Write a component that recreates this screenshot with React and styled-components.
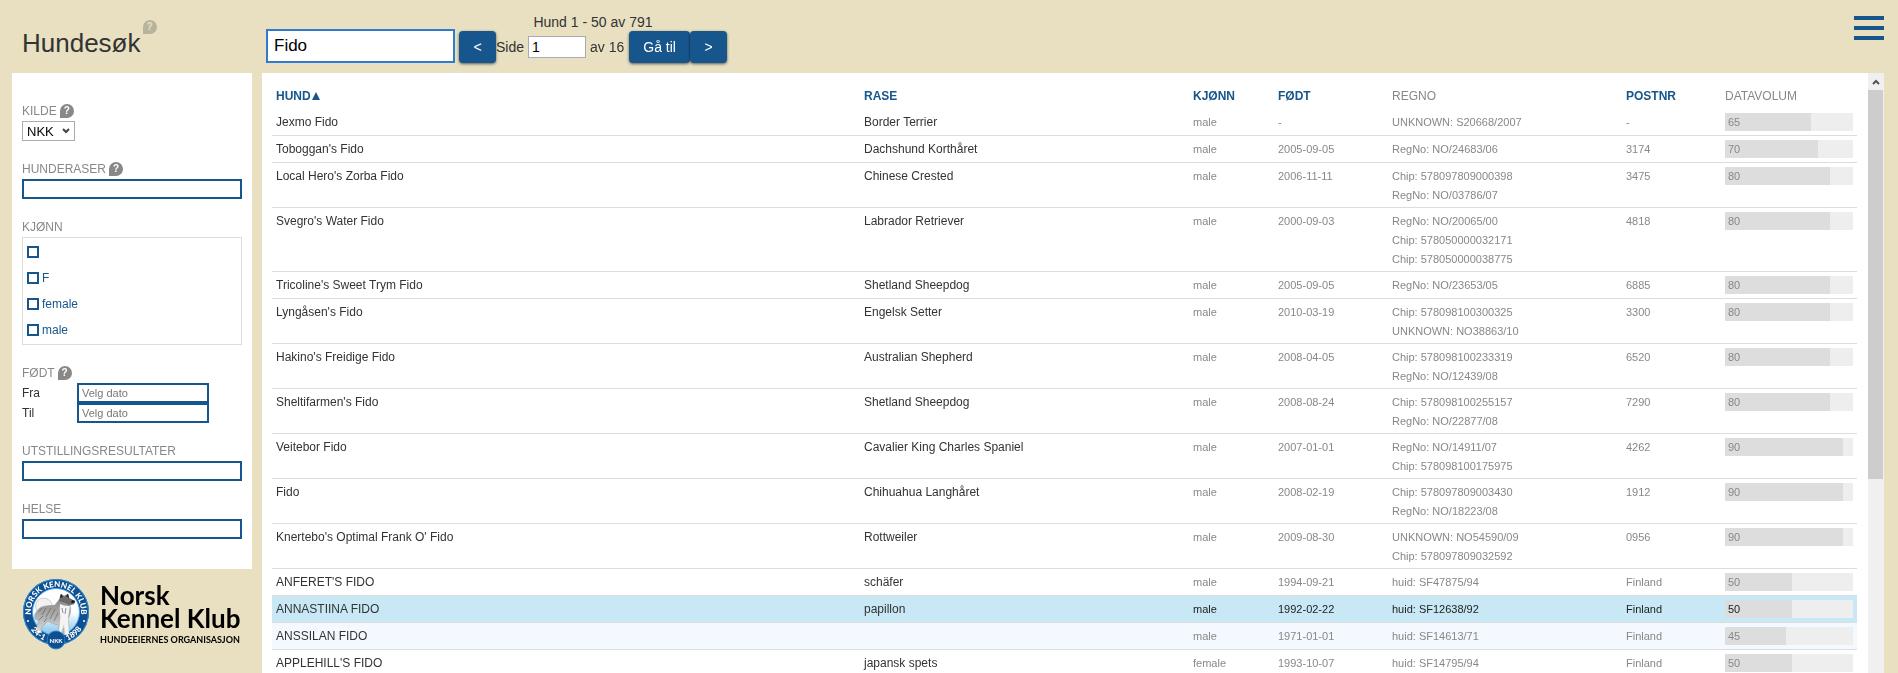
import React from "react";
import styled, { createGlobalStyle } from "styled-components";

const blue = "#17568c";
const sand = "#e8e0c1";

const GlobalStyle = createGlobalStyle`
  *, *::before, *::after { box-sizing: border-box; }
  body {
    margin: 0;
    background: ${sand};
    color: #333;
    font-family: "Liberation Sans", Arial, sans-serif;
    font-size: 12px;
  }
  input, button, select { font-family: inherit; margin: 0; }
`;

const Page = styled.div`
  display: flex;
  flex-direction: column;
  height: 100vh;
  overflow: hidden;
`;

const Header = styled.header`
  flex: none;
  display: flex;
  align-items: flex-start;
  height: 73px;
  padding: 0 14px 0 22px;
`;

const TitleBlock = styled.div`
  display: flex;
  align-items: flex-start;
  gap: 2px;
  width: 244px;
  padding-top: 20px;
`;

const Title = styled.h1`
  margin: 0;
  padding-top: 8px;
  font-size: 26px;
  line-height: 30px;
  font-weight: 400;
`;

const HelpButton = styled.button`
  flex: none;
  width: 14px;
  height: 14px;
  padding: 0;
  border: 0;
  border-radius: 7px 7px 7px 0;
  background: ${(p) => (p.$faded ? "#b8b39f" : "#888")};
  color: ${(p) => (p.$faded ? sand : "#fff")};
  font-size: 10px;
  line-height: 14px;
  font-weight: 700;
`;

const SearchInput = styled.input`
  width: 189px;
  height: 34px;
  margin: 29px 4px 0 0;
  padding: 0 6px;
  border: 2px solid #2f7bd0;
  border-radius: 0;
  outline: none;
  background: #fff;
  color: #000;
  font-size: 17px;
`;

const Pager = styled.nav`
  display: flex;
  flex-direction: column;
  align-items: center;
  padding-top: 14px;
  font-size: 14px;
  line-height: 17px;
`;

const PagerRow = styled.div`
  display: flex;
  align-items: center;
`;

const PagerButton = styled.button`
  height: 32px;
  min-width: 37px;
  padding: 0 14px;
  border: 0;
  border-radius: 4px;
  background: ${blue};
  box-shadow: 0 1px 3px rgba(0, 0, 0, 0.6);
  color: #fff;
  font-size: 14px;
`;

const PageLabel = styled.label`
  display: flex;
  align-items: center;
  gap: 4px;
  margin-right: 5px;
`;

const PageInput = styled.input`
  width: 58px;
  height: 22px;
  padding: 0 3px;
  border: 1px solid #aaaab2;
  border-radius: 0;
  background: #fff;
  color: #000;
  font-size: 14px;
`;

const MenuButton = styled.button`
  display: flex;
  flex-direction: column;
  gap: 6px;
  width: 30px;
  margin: 16px 0 0 auto;
  padding: 0;
  border: 0;
  background: none;
`;

const MenuBar = styled.span`
  height: 4px;
  width: 100%;
  background: ${blue};
`;

const Body = styled.div`
  flex: 1;
  min-height: 0;
  display: flex;
  gap: 10px;
  padding: 0 14px 0 12px;
`;

const Sidebar = styled.aside`
  flex: none;
  width: 240px;
`;

const Filters = styled.form`
  display: flex;
  flex-direction: column;
  gap: 18px;
  padding: 28px 10px 30px;
  background: #fff;
`;

const Field = styled.div`
  display: flex;
  flex-direction: column;
  align-items: flex-start;
`;

const FieldHead = styled.div`
  display: flex;
  align-items: center;
  gap: 3px;
  height: 20px;
  color: #888;
  line-height: 20px;
`;

const FilterInput = styled.input`
  width: ${(p) => (p.$date ? "132px" : "100%")};
  height: 20px;
  padding: 0 3px;
  border: 2px solid ${blue};
  border-radius: 0;
  background: #fff;
  font-size: 11px;
  &::placeholder { color: #777; opacity: 1; }
`;

const SelectWrap = styled.div`
  display: grid;
  align-items: center;
  width: 53px;
  & > * { grid-area: 1 / 1; }
  & > svg { justify-self: end; margin-right: 5px; pointer-events: none; }
`;

const SourceSelect = styled.select`
  appearance: none;
  width: 100%;
  height: 20px;
  padding: 0 4px;
  border: 1px solid #aaaab2;
  border-radius: 0;
  background: #fff;
  color: #000;
  font-size: 13px;
`;

const CheckList = styled.div`
  width: 100%;
  padding: 1px 4px;
  border: 1px solid #ddd;
`;

const CheckLabel = styled.label`
  display: flex;
  align-items: center;
  gap: 3px;
  height: 26px;
  color: ${blue};
`;

const CheckBox = styled.input`
  appearance: none;
  width: 12px;
  height: 12px;
  border: 2px solid ${blue};
  background: #fff;
  &:checked { background: ${blue}; }
`;

const DateRow = styled.label`
  display: grid;
  grid-template-columns: 55px auto;
  align-items: center;
`;

const Logo = styled.a`
  display: flex;
  align-items: flex-start;
  gap: 10px;
  padding: 9px 0 0 10px;
  color: #000;
  text-decoration: none;
  & > svg { flex: none; }
`;

const Wordmark = styled.span`
  display: flex;
  flex-direction: column;
  padding-top: 6px;
  font-family: Lato, sans-serif;
  font-size: 26px;
  line-height: 23px;
  font-weight: 700;
  white-space: nowrap;
`;

const Tagline = styled.span`
  padding-top: 2px;
  font-family: Lato, sans-serif;
  font-size: 9px;
  line-height: 16px;
  font-weight: 700;
`;

const Results = styled.main`
  flex: 1;
  min-width: 0;
  display: flex;
  background: #fff;
`;

const TableArea = styled.div`
  flex: 1;
  min-width: 0;
  overflow: hidden;
  padding: 10px 11px 0 10px;
`;

const Table = styled.table`
  width: 100%;
  table-layout: fixed;
  border-collapse: separate;
  border-spacing: 0;
`;

const Col = styled.col`
  width: ${(p) => p.$w};
`;

const Th = styled.th`
  height: 26px;
  padding: 0 4px;
  color: ${(p) => (p.$plain ? "#888" : blue)};
  font-weight: ${(p) => (p.$plain ? 400 : 700)};
  text-align: left;
  white-space: nowrap;
`;

const SortLink = styled.a`
  display: flex;
  align-items: center;
  color: inherit;
  text-decoration: none;
`;

const Row = styled.tr`
  background: ${(p) => (p.$active ? "#c8e8f5" : p.$tinted ? "#f3f9fe" : "#fff")};
  color: ${(p) => (p.$active ? "#222" : "#888")};
`;

const Td = styled.td`
  padding: 4px;
  border-bottom: 1px solid #ddd;
  vertical-align: top;
  font-size: ${(p) => (p.$name ? "12px" : "11px")};
  line-height: 18px;
  color: ${(p) => (p.$name ? "#333" : "inherit")};
`;

const RegTd = styled(Td)`
  padding: 4px 4px 2px;
  line-height: 19px;
`;

const Meter = styled.div`
  height: 18px;
  background: #eee;
`;

const MeterFill = styled.div`
  box-sizing: content-box;
  height: 18px;
  padding-left: 3px;
  background: #ddd;
`;

const ScrollTrack = styled.div`
  flex: none;
  display: flex;
  flex-direction: column;
  width: 16px;
  padding-right: 1px;
  background: #f0f0f0;
`;

const ScrollUp = styled.button`
  flex: none;
  display: flex;
  align-items: center;
  justify-content: center;
  height: 17px;
  padding: 0;
  border: 0;
  background: none;
`;

const ScrollThumb = styled.div`
  flex: 2;
  background: #cdcdcd;
`;

const ScrollRest = styled.div`
  flex: 1;
`;

const dogs = [
  ["Jexmo Fido", "Border Terrier", "male", "-", ["UNKNOWN: S20668/2007"], "-", 65],
  ["Toboggan's Fido", "Dachshund Korthåret", "male", "2005-09-05", ["RegNo: NO/24683/06"], "3174", 70],
  ["Local Hero's Zorba Fido", "Chinese Crested", "male", "2006-11-11", ["Chip: 578097809000398", "RegNo: NO/03786/07"], "3475", 80],
  ["Svegro's Water Fido", "Labrador Retriever", "male", "2000-09-03", ["RegNo: NO/20065/00", "Chip: 578050000032171", "Chip: 578050000038775"], "4818", 80],
  ["Tricoline's Sweet Trym Fido", "Shetland Sheepdog", "male", "2005-09-05", ["RegNo: NO/23653/05"], "6885", 80],
  ["Lyngåsen's Fido", "Engelsk Setter", "male", "2010-03-19", ["Chip: 578098100300325", "UNKNOWN: NO38863/10"], "3300", 80],
  ["Hakino's Freidige Fido", "Australian Shepherd", "male", "2008-04-05", ["Chip: 578098100233319", "RegNo: NO/12439/08"], "6520", 80],
  ["Sheltifarmen's Fido", "Shetland Sheepdog", "male", "2008-08-24", ["Chip: 578098100255157", "RegNo: NO/22877/08"], "7290", 80],
  ["Veitebor Fido", "Cavalier King Charles Spaniel", "male", "2007-01-01", ["RegNo: NO/14911/07", "Chip: 578098100175975"], "4262", 90],
  ["Fido", "Chihuahua Langhåret", "male", "2008-02-19", ["Chip: 578097809003430", "RegNo: NO/18223/08"], "1912", 90],
  ["Knertebo's Optimal Frank O' Fido", "Rottweiler", "male", "2009-08-30", ["UNKNOWN: NO54590/09", "Chip: 578097809032592"], "0956", 90],
  ["ANFERET'S FIDO", "schäfer", "male", "1994-09-21", ["huid: SF47875/94"], "Finland", 50],
  ["ANNASTIINA FIDO", "papillon", "male", "1992-02-22", ["huid: SF12638/92"], "Finland", 50, "active"],
  ["ANSSILAN FIDO", "", "male", "1971-01-01", ["huid: SF14613/71"], "Finland", 45, "tinted"],
  ["APPLEHILL'S FIDO", "japansk spets", "female", "1993-10-07", ["huid: SF14795/94"], "Finland", 50],
];

const columns = [
  ["HUND", "auto", true],
  ["RASE", "329px", true],
  ["KJØNN", "85px", true],
  ["FØDT", "114px", true],
  ["REGNO", "234px", false],
  ["POSTNR", "99px", true],
  ["DATAVOLUM", "136px", false],
];

const Help = ({ faded }) => (
  <HelpButton type="button" aria-label="Hjelp" $faded={faded}>?</HelpButton>
);

const SortArrow = () => (
  <svg width="10" height="8" viewBox="0 0 10 8" aria-hidden="true">
    <path d="M1 8 L5 0 L9 8 Z" fill="currentColor" />
  </svg>
);

function TextField({ id, label, help }) {
  return (
    <Field>
      <FieldHead>
        <label htmlFor={id}>{label}</label>
        {help && <Help />}
      </FieldHead>
      <FilterInput id={id} type="text" />
    </Field>
  );
}

function Badge() {
  return (
    <svg width="68" height="72" viewBox="0 0 68 72" aria-hidden="true">
      <defs>
        <linearGradient id="sky" x1="0" y1="0" x2="0" y2="1">
          <stop offset="0.5" stopColor="#fff" />
          <stop offset="1" stopColor="#7fc0ea" />
        </linearGradient>
        <linearGradient id="fur" x1="0" y1="0" x2="0" y2="1">
          <stop offset="0" stopColor="#7d7d7d" />
          <stop offset="0.5" stopColor="#aaa" />
          <stop offset="1" stopColor="#e4e4e4" />
        </linearGradient>
        <path id="arcTop" d="M10.500 42.500 A25 25 0 1 1 57.500 42.500" />
        <path id="arcLeft" d="M6 47 A31 31 0 0 0 27 64" />
        <path id="arcRight" d="M41 64 A31 31 0 0 0 62 47" />
      </defs>
      <circle cx="34" cy="34" r="33" fill="#0d4f92" />
      <circle cx="34" cy="34" r="32.500" fill="none" stroke="#2b8fd6" strokeWidth="1" />
      <circle cx="34" cy="34" r="23.500" fill="url(#sky)" stroke="#49a7e2" strokeWidth="1" />
      <path d="M14 31 C12 23 19 18 25 21 C30 23 31 27 28 30 C24 28 19 28 15 33 Z" fill="#f1f1f1" stroke="#c4c4c4" strokeWidth="0.800" />
      <path
        d="M15 33 C19 27 26 28 33 27 C35 24 37 22 38 20 L39 16 L42 18 L46 16 L47 20 L50 22 L53 23 L52 26 L48 27 C49 32 49 36 46 41 L47 48 L46 57 L42 57 L42 50 L40 55 L36 55 L37 47 C32 47 28 44 26 43 L22 47 L19 50 L20 55 L15 55 L15 48 L17 43 L13 41 C12 38 13 35 15 33 Z"
        fill="url(#fur)"
        stroke="#999"
        strokeWidth="0.500"
      />
      <path d="M37 23 L39 16 L42 19 L46 16 L47 20 L53 23 L52 26 L47 27 L43 25 Z" fill="#6b6b6b" />
      <path d="M38 20 L39 16 L41 19 Z M44 18 L46 16 L47 20 Z M50 22 L53 23 L52 25 L49 25 Z" fill="#1c1c1c" />
      <path d="M38 26 C42 28 46 28 48 28 L46 40 L47 56 L43 56 L42 46 L39 54 L37 54 L38 44 C39 38 37 32 38 26 Z" fill="#f4f4f4" />
      <path d="M17 34 L20 30 M20 37 L24 30 M24 39 L29 30 M28 41 L33 31 M32 43 L36 35 M17 42 L21 38 M22 44 L25 40 M40 30 L41 35 M44 30 L43 36" fill="none" stroke="#666" strokeWidth="0.700" />
      <g fill="#fff" fontFamily="Lato, sans-serif" fontSize="8" fontWeight="900" textAnchor="middle">
        <text><textPath href="#arcTop" startOffset="50%">NORSK KENNEL KLUB</textPath></text>
        <text><textPath href="#arcLeft" startOffset="50%">24-1</textPath></text>
        <text><textPath href="#arcRight" startOffset="50%">1898</textPath></text>
      </g>
      <circle cx="6" cy="43" r="1" fill="#fff" />
      <circle cx="62" cy="43" r="1" fill="#fff" />
      <circle cx="34" cy="62" r="9" fill="#0d4f92" stroke="#2b7fc2" />
      <text x="34" y="65" fill="#fff" fontFamily="Lato, sans-serif" fontSize="6" fontWeight="900" textAnchor="middle">NKK</text>
    </svg>
  );
}

export default function App() {
  return (
    <Page>
      <GlobalStyle />
      <Header>
        <TitleBlock>
          <Title>Hundesøk</Title>
          <Help faded />
        </TitleBlock>
        <SearchInput type="text" aria-label="Søk" defaultValue="Fido" autoFocus />
        <Pager aria-label="Sider">
          <span>Hund 1 - 50 av 791</span>
          <PagerRow>
            <PagerButton type="button">&lt;</PagerButton>
            <PageLabel>
              Side
              <PageInput type="text" defaultValue="1" />
              av 16
            </PageLabel>
            <PagerButton type="button">Gå til</PagerButton>
            <PagerButton type="button">&gt;</PagerButton>
          </PagerRow>
        </Pager>
        <MenuButton type="button" aria-label="Meny">
          <MenuBar />
          <MenuBar />
          <MenuBar />
        </MenuButton>
      </Header>
      <Body>
        <Sidebar>
          <Filters>
            <Field>
              <FieldHead>
                <label htmlFor="kilde">KILDE</label>
                <Help />
              </FieldHead>
              <SelectWrap>
                <SourceSelect id="kilde" defaultValue="NKK">
                  <option>NKK</option>
                </SourceSelect>
                <svg width="8" height="6" viewBox="0 0 8 6" aria-hidden="true">
                  <path d="M1 1 L4 4 L7 1" fill="none" stroke="#444" strokeWidth="2" />
                </svg>
              </SelectWrap>
            </Field>
            <TextField id="raser" label="HUNDERASER" help />
            <Field role="group" aria-label="KJØNN">
              <FieldHead>KJØNN</FieldHead>
              <CheckList>
                {["", "F", "female", "male"].map((name) => (
                  <CheckLabel key={name}>
                    <CheckBox type="checkbox" aria-label={name || "Ukjent"} />
                    {name}
                  </CheckLabel>
                ))}
              </CheckList>
            </Field>
            <Field role="group" aria-label="FØDT">
              <FieldHead>
                FØDT
                <Help />
              </FieldHead>
              {["Fra", "Til"].map((name) => (
                <DateRow key={name}>
                  {name}
                  <FilterInput type="text" placeholder="Velg dato" $date />
                </DateRow>
              ))}
            </Field>
            <TextField id="utstilling" label="UTSTILLINGSRESULTATER" />
            <TextField id="helse" label="HELSE" />
          </Filters>
          <Logo href="#">
            <Badge />
            <Wordmark>
              <span>Norsk</span>
              <span>Kennel Klub</span>
              <Tagline>HUNDEEIERNES ORGANISASJON</Tagline>
            </Wordmark>
          </Logo>
        </Sidebar>
        <Results>
          <TableArea>
            <Table>
              <colgroup>
                {columns.map(([name, width]) => (
                  <Col key={name} $w={width} />
                ))}
              </colgroup>
              <thead>
                <tr>
                  {columns.map(([name, , sortable], i) => (
                    <Th key={name} $plain={!sortable}>
                      {sortable ? (
                        <SortLink href="#">
                          {name}
                          {i === 0 && <SortArrow />}
                        </SortLink>
                      ) : (
                        name
                      )}
                    </Th>
                  ))}
                </tr>
              </thead>
              <tbody>
                {dogs.map(([name, breed, sex, born, regs, post, volume, state]) => (
                  <Row key={name} $active={state === "active"} $tinted={state === "tinted"}>
                    <Td $name>{name}</Td>
                    <Td $name>{breed}</Td>
                    <Td>{sex}</Td>
                    <Td>{born}</Td>
                    <RegTd>
                      {regs.map((reg) => (
                        <div key={reg}>{reg}</div>
                      ))}
                    </RegTd>
                    <Td>{post}</Td>
                    <Td>
                      <Meter>
                        <MeterFill style={{ width: `${volume}%` }}>{volume}</MeterFill>
                      </Meter>
                    </Td>
                  </Row>
                ))}
              </tbody>
            </Table>
          </TableArea>
          <ScrollTrack>
            <ScrollUp type="button" aria-label="Rull opp">
              <svg width="8" height="6" viewBox="0 0 8 6" aria-hidden="true">
                <path d="M1 5 L4 2 L7 5" fill="none" stroke="#555" strokeWidth="2" />
              </svg>
            </ScrollUp>
            <ScrollThumb />
            <ScrollRest />
          </ScrollTrack>
        </Results>
      </Body>
    </Page>
  );
}
